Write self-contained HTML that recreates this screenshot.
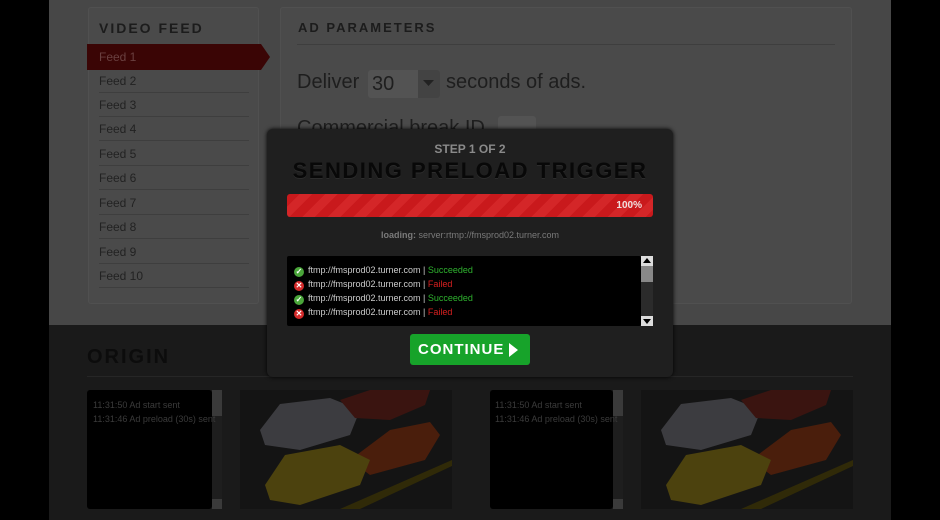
<!DOCTYPE html>
<html><head><meta charset="utf-8"><style>
*{margin:0;padding:0;box-sizing:border-box}
body{width:940px;height:520px;background:#000;position:relative;overflow:hidden;font-family:"Liberation Sans",sans-serif}
.abs{position:absolute}
.top{left:49px;top:0;width:842px;height:325px;background:#474747}
.bot{left:49px;top:325px;width:842px;height:195px;background:#1a1a1a}
.panel{background:#4a4a4a;border:1px solid #505050;border-radius:3px}
.h{font-weight:bold;letter-spacing:2px;color:#1c1c1c;font-size:14px}
.feed{left:99px;font-size:12px;color:#222;width:150px;height:24px;border-bottom:1px solid #3e3e3e;line-height:24px}
.log{background:#000}
.sb{background:#1e1e1e}
.logt{color:#3b3b3b;font-size:9px;line-height:14px}
.ic{display:inline-block;width:10px;height:10px;border-radius:50%;vertical-align:-1px;margin-right:4px;color:#fff;font-size:8px;line-height:10px;text-align:center;font-weight:bold}
</style></head><body>
<div class="abs top"></div>
<div class="abs bot"></div>
<div class="abs panel" style="left:88px;top:7px;width:171px;height:297px"></div>
<div class="abs panel" style="left:280px;top:7px;width:572px;height:297px"></div>
<div class="abs h" style="left:99px;top:20px">VIDEO FEED</div>
<div class="abs h" style="left:298px;top:20px;font-size:13px">AD PARAMETERS</div>
<div class="abs" style="left:297px;top:44px;width:538px;height:1px;background:#3e3e3e"></div>
<svg class="abs" style="left:87px;top:44px" width="183" height="26"><polygon points="0,0 174,0 183,13 174,26 0,26" fill="#3a0505"/></svg>
<div class="abs" style="left:99px;top:44px;line-height:26px;font-size:12px;color:#6a4040">Feed 1</div>
<div class="abs feed" style="top:69px">Feed 2</div>
<div class="abs feed" style="top:93px">Feed 3</div>
<div class="abs feed" style="top:117px">Feed 4</div>
<div class="abs feed" style="top:142px">Feed 5</div>
<div class="abs feed" style="top:166px">Feed 6</div>
<div class="abs feed" style="top:191px">Feed 7</div>
<div class="abs feed" style="top:215px">Feed 8</div>
<div class="abs feed" style="top:240px">Feed 9</div>
<div class="abs feed" style="top:264px">Feed 10</div>
<div class="abs" style="left:297px;top:71px;font-size:20px;color:#1e1e1e">Deliver</div>
<div class="abs" style="left:368px;top:70px;width:72px;height:28px;background:#535353;border-radius:3px"></div>
<div class="abs" style="left:418px;top:70px;width:22px;height:28px;background:#434343;border-radius:0 3px 3px 0"></div>
<svg class="abs" style="left:423px;top:80px" width="12" height="8"><polygon points="0,0 11,0 5.5,6" fill="#222"/></svg>
<div class="abs" style="left:372px;top:73px;font-size:20px;color:#1e1e1e">30</div>
<div class="abs" style="left:446px;top:71px;font-size:20px;color:#1e1e1e">seconds of ads.</div>
<div class="abs" style="left:297px;top:117px;font-size:20px;color:#1e1e1e">Commercial break ID</div>
<div class="abs" style="left:498px;top:116px;width:38px;height:20px;background:#535353;border-radius:3px"></div>

<div class="abs h" style="left:87px;top:346px;font-size:20px;color:#0c0c0c;letter-spacing:2px">ORIGIN</div>
<div class="abs" style="left:87px;top:376px;width:766px;height:1px;background:#262626"></div>

<div class="abs log" style="left:87px;top:390px;width:125px;height:119px;border-radius:3px"></div>
<div class="abs sb" style="left:212px;top:390px;width:10px;height:119px"></div>
<div class="abs" style="left:212px;top:390px;width:10px;height:26px;background:#3a3a3a"></div>
<div class="abs" style="left:212px;top:499px;width:10px;height:10px;background:#3a3a3a"></div>
<div class="abs logt" style="left:93px;top:398px">11:31:50 Ad start sent<br>11:31:46 Ad preload (30s) sent</div>
<div class="abs log" style="left:490px;top:390px;width:123px;height:119px;border-radius:3px"></div>
<div class="abs sb" style="left:613px;top:390px;width:10px;height:119px"></div>
<div class="abs" style="left:613px;top:390px;width:10px;height:26px;background:#3a3a3a"></div>
<div class="abs" style="left:613px;top:499px;width:10px;height:10px;background:#3a3a3a"></div>
<div class="abs logt" style="left:495px;top:398px">11:31:50 Ad start sent<br>11:31:46 Ad preload (30s) sent</div>

<svg class="abs" style="left:240px;top:390px" width="212" height="119" viewBox="0 0 212 119">
<rect width="212" height="119" fill="#141414"/>
<polygon points="20,40 40,14 90,8 120,20 110,45 60,60 25,55" fill="#3c3c40"/>
<polygon points="100,10 130,0 190,0 185,15 150,30 115,28" fill="#3a1410"/>
<polygon points="110,70 150,40 190,32 200,45 185,70 130,85" fill="#4a1e0c"/>
<polygon points="25,95 45,65 100,55 130,70 120,95 60,115 30,110" fill="#4c420e"/>
<polygon points="100,119 212,70 212,76 120,119" fill="#302a08"/>
</svg>
<svg class="abs" style="left:641px;top:390px" width="212" height="119" viewBox="0 0 212 119">
<rect width="212" height="119" fill="#141414"/>
<polygon points="20,40 40,14 90,8 120,20 110,45 60,60 25,55" fill="#3c3c40"/>
<polygon points="100,10 130,0 190,0 185,15 150,30 115,28" fill="#3a1410"/>
<polygon points="110,70 150,40 190,32 200,45 185,70 130,85" fill="#4a1e0c"/>
<polygon points="25,95 45,65 100,55 130,70 120,95 60,115 30,110" fill="#4c420e"/>
<polygon points="100,119 212,70 212,76 120,119" fill="#302a08"/>
</svg>

<!-- modal -->
<div class="abs" style="left:267px;top:129px;width:406px;height:248px;background:#1f1f1f;border-radius:6px;box-shadow:0 0 4px #000"></div>
<div class="abs" style="left:267px;top:142px;width:406px;text-align:center;font-weight:bold;font-size:12px;color:#8a8a8a">STEP 1 OF 2</div>
<div class="abs" style="left:267px;top:158px;width:406px;text-align:center;font-weight:bold;font-size:22px;letter-spacing:1.5px;color:#080808;text-shadow:0 1px 0 #2c2c2c">SENDING PRELOAD TRIGGER</div>
<div class="abs" style="left:287px;top:194px;width:366px;height:23px;border-radius:3px;background:repeating-linear-gradient(135deg,#c9191c 0 9px,#d42628 9px 18px)"></div>
<div class="abs" style="left:600px;top:200px;width:42px;text-align:right;font-size:10px;font-weight:bold;color:#f0e0e0">100%</div>
<div class="abs" style="left:267px;top:230px;width:406px;text-align:center;font-size:9px;color:#7a7a7a"><b>loading:</b> server:rtmp://fmsprod02.turner.com</div>
<div class="abs" style="left:287px;top:256px;width:354px;height:70px;background:#000;border-radius:2px"></div>
<div class="abs" style="left:641px;top:256px;width:12px;height:70px;background:#2b2b2b"></div>
<div class="abs" style="left:641px;top:256px;width:12px;height:10px;background:#ddd"></div>
<div class="abs" style="left:641px;top:266px;width:12px;height:16px;background:#888"></div>
<div class="abs" style="left:641px;top:316px;width:12px;height:10px;background:#ddd"></div>
<svg class="abs" style="left:643px;top:258px" width="8" height="6"><polygon points="4,0 8,5 0,5" fill="#000"/></svg>
<svg class="abs" style="left:643px;top:319px" width="8" height="6"><polygon points="0,0 8,0 4,5" fill="#000"/></svg>
<div class="abs" style="left:294px;top:263px;font-size:9px;line-height:14px;color:#ccc">
<div><span class="ic" style="background:#4aa63a">✓</span>ftmp://fmsprod02.turner.com | <span style="color:#2fb32f">Succeeded</span></div>
<div><span class="ic" style="background:#d42a2a">✕</span>ftmp://fmsprod02.turner.com | <span style="color:#d82020">Failed</span></div>
<div><span class="ic" style="background:#4aa63a">✓</span>ftmp://fmsprod02.turner.com | <span style="color:#2fb32f">Succeeded</span></div>
<div><span class="ic" style="background:#d42a2a">✕</span>ftmp://fmsprod02.turner.com | <span style="color:#d82020">Failed</span></div>
</div>
<div class="abs" style="left:410px;top:334px;width:120px;height:31px;background:#17a32a;border-radius:3px;color:#fff;font-weight:bold;font-size:15px;letter-spacing:1px;line-height:31px;padding-left:8px">CONTINUE</div>
<svg class="abs" style="left:509px;top:343px" width="10" height="14"><polygon points="0,0 9,7 0,14" fill="#fff"/></svg>
</body></html>
